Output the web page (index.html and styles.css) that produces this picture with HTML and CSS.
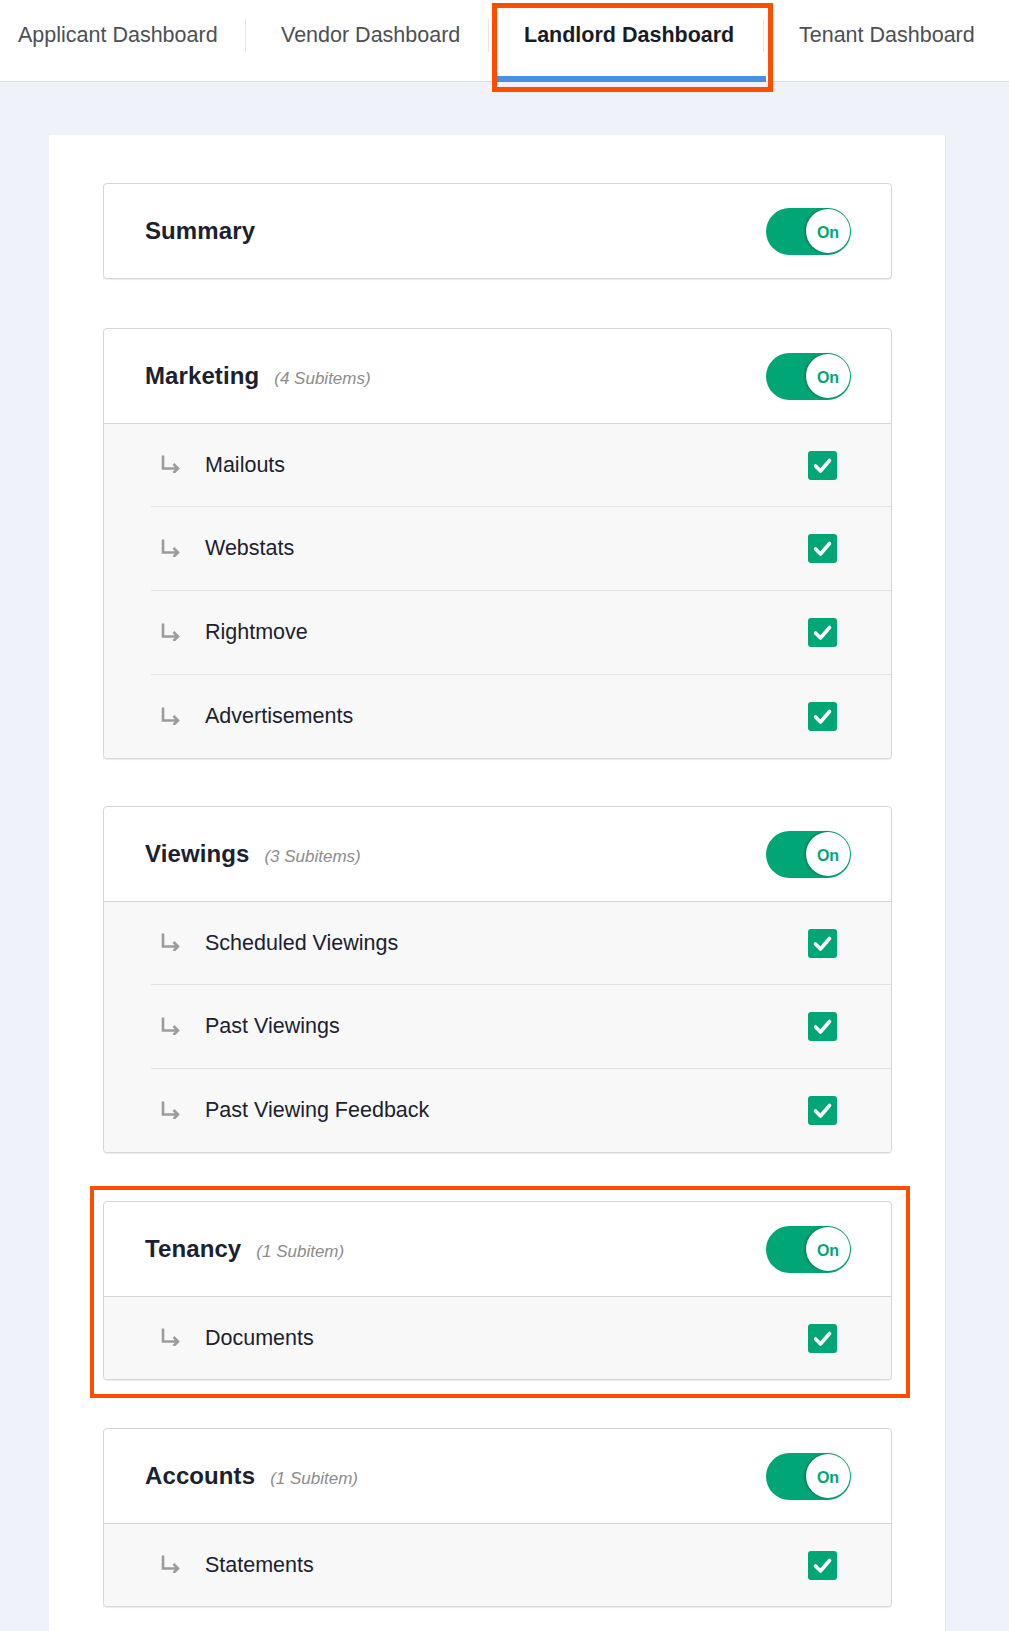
FILE: index.html
```html
<!DOCTYPE html>
<html lang="en">
<head>
<meta charset="utf-8">
<title>Landlord Dashboard</title>
<link rel="stylesheet" href="styles.css">
</head>
<body>
<nav class="tabs">
  <div class="tab tab-applicant">Applicant Dashboard</div>
  <div class="tab tab-vendor sep">Vendor Dashboard</div>
  <div class="tab tab-landlord sep active">Landlord Dashboard<span class="mark mark-tab"></span></div>
  <div class="tab tab-tenant sep">Tenant Dashboard</div>
</nav>

<main class="page">
  <section class="panel">

    <div class="card">
      <div class="card-head">
        <div class="title">Summary</div>
        <div class="toggle"><span class="knob">On</span></div>
      </div>
    </div>

    <div class="card">
      <div class="card-head">
        <div class="title">Marketing<span class="count">(4 Subitems)</span></div>
        <div class="toggle"><span class="knob">On</span></div>
      </div>
      <div class="subs">
        <div class="row"><svg class="arrow" viewBox="0 0 20 18"><path d="M2 0.5V13.5H17M12.5 9L17 13.5L12.5 18"/></svg><span class="label">Mailouts</span><span class="check"><svg viewBox="0 0 29 29"><path d="M7.5 15L12.5 20L21.5 9.5"/></svg></span></div>
        <div class="row"><svg class="arrow" viewBox="0 0 20 18"><path d="M2 0.5V13.5H17M12.5 9L17 13.5L12.5 18"/></svg><span class="label">Webstats</span><span class="check"><svg viewBox="0 0 29 29"><path d="M7.5 15L12.5 20L21.5 9.5"/></svg></span></div>
        <div class="row"><svg class="arrow" viewBox="0 0 20 18"><path d="M2 0.5V13.5H17M12.5 9L17 13.5L12.5 18"/></svg><span class="label">Rightmove</span><span class="check"><svg viewBox="0 0 29 29"><path d="M7.5 15L12.5 20L21.5 9.5"/></svg></span></div>
        <div class="row"><svg class="arrow" viewBox="0 0 20 18"><path d="M2 0.5V13.5H17M12.5 9L17 13.5L12.5 18"/></svg><span class="label">Advertisements</span><span class="check"><svg viewBox="0 0 29 29"><path d="M7.5 15L12.5 20L21.5 9.5"/></svg></span></div>
      </div>
    </div>

    <div class="card card-gap">
      <div class="card-head">
        <div class="title">Viewings<span class="count">(3 Subitems)</span></div>
        <div class="toggle"><span class="knob">On</span></div>
      </div>
      <div class="subs">
        <div class="row"><svg class="arrow" viewBox="0 0 20 18"><path d="M2 0.5V13.5H17M12.5 9L17 13.5L12.5 18"/></svg><span class="label">Scheduled Viewings</span><span class="check"><svg viewBox="0 0 29 29"><path d="M7.5 15L12.5 20L21.5 9.5"/></svg></span></div>
        <div class="row"><svg class="arrow" viewBox="0 0 20 18"><path d="M2 0.5V13.5H17M12.5 9L17 13.5L12.5 18"/></svg><span class="label">Past Viewings</span><span class="check"><svg viewBox="0 0 29 29"><path d="M7.5 15L12.5 20L21.5 9.5"/></svg></span></div>
        <div class="row"><svg class="arrow" viewBox="0 0 20 18"><path d="M2 0.5V13.5H17M12.5 9L17 13.5L12.5 18"/></svg><span class="label">Past Viewing Feedback</span><span class="check"><svg viewBox="0 0 29 29"><path d="M7.5 15L12.5 20L21.5 9.5"/></svg></span></div>
      </div>
    </div>

    <div class="card card-gap highlighted">
      <span class="mark mark-card"></span>
      <div class="card-head">
        <div class="title">Tenancy<span class="count">(1 Subitem)</span></div>
        <div class="toggle"><span class="knob">On</span></div>
      </div>
      <div class="subs">
        <div class="row"><svg class="arrow" viewBox="0 0 20 18"><path d="M2 0.5V13.5H17M12.5 9L17 13.5L12.5 18"/></svg><span class="label">Documents</span><span class="check"><svg viewBox="0 0 29 29"><path d="M7.5 15L12.5 20L21.5 9.5"/></svg></span></div>
      </div>
    </div>

    <div class="card">
      <div class="card-head">
        <div class="title">Accounts<span class="count">(1 Subitem)</span></div>
        <div class="toggle"><span class="knob">On</span></div>
      </div>
      <div class="subs">
        <div class="row"><svg class="arrow" viewBox="0 0 20 18"><path d="M2 0.5V13.5H17M12.5 9L17 13.5L12.5 18"/></svg><span class="label">Statements</span><span class="check"><svg viewBox="0 0 29 29"><path d="M7.5 15L12.5 20L21.5 9.5"/></svg></span></div>
      </div>
    </div>

  </section>
</main>
</body>
</html>
```

FILE: styles.css
```css
* { box-sizing: border-box; }

html, body {
  margin: 0;
  padding: 0;
}

body {
  background: #eff2f9;
  font-family: "Liberation Sans", Arial, sans-serif;
  color: #1b2130;
  overflow: hidden;
}

/* ---------- tabs ---------- */
.tabs {
  display: flex;
  height: 82px;
  background: #ffffff;
  border-bottom: 1px solid #dedede;
}

.tab {
  position: relative;
  height: 81px;
  padding: 23px 0 0 36px;
  font-size: 21.5px;
  line-height: 25px;
  color: #4d4f55;
  white-space: nowrap;
}

.tab-applicant { width: 245px; padding-left: 18px; }
.tab-vendor { width: 243px; }
.tab-landlord { width: 275px; }
.tab-tenant { flex: 1; }

.tab.sep::before {
  content: "";
  position: absolute;
  left: 0;
  top: 19px;
  height: 33px;
  width: 1px;
  background: #e7e7e7;
}

.tab.active {
  font-weight: bold;
  color: #171c27;
}

.tab.active::after {
  content: "";
  position: absolute;
  left: 9px;
  right: -3px;
  bottom: -1px;
  height: 6px;
  background: #4a90e2;
}

/* annotation boxes */
.mark {
  position: absolute;
  border: 5px solid #ff4d00;
  pointer-events: none;
  z-index: 3;
}

.mark-tab {
  left: 4px;
  top: 3px;
  width: 281px;
  height: 89px;
}

.mark-card {
  left: -14px;
  top: -16px;
  right: -19px;
  bottom: -19px;
  border-width: 4.5px;
}

/* ---------- page ---------- */
.page {
  padding: 53px 63px 0 49px;
}

.panel {
  background: #ffffff;
  border-right: 1px solid #e4e7ef;
  padding: 48px 53px 60px 54px;
  min-height: 1500px;
}

.card {
  position: relative;
  background: #ffffff;
  border: 1px solid #d6d6d6;
  border-radius: 4px;
  box-shadow: 0 1px 1px rgba(0, 0, 0, 0.08);
  margin-bottom: 47px;
}

.card:first-child {
  margin-bottom: 49px;
}

.card.card-gap {
  margin-bottom: 48px;
}

.card-head {
  height: 94px;
  display: flex;
  align-items: center;
  justify-content: space-between;
  padding: 0 40px 0 41px;
}

.title {
  font-size: 24px;
  font-weight: bold;
  letter-spacing: 0.1px;
  color: #1b2130;
  display: flex;
  align-items: baseline;
}

.count {
  font-size: 17px;
  font-weight: normal;
  font-style: italic;
  color: #8c8c8c;
  margin-left: 15px;
  letter-spacing: 0;
}

/* toggle */
.toggle {
  width: 85px;
  height: 47px;
  border-radius: 24px;
  background: #00a676;
  display: flex;
  align-items: center;
  justify-content: flex-end;
  padding-right: 1px;
}

.knob {
  width: 44px;
  height: 44px;
  border-radius: 50%;
  background: #ffffff;
  box-shadow: -1px 0 3px rgba(0, 0, 0, 0.35);
  display: flex;
  align-items: center;
  justify-content: center;
  padding-top: 3px;
  font-size: 16px;
  font-weight: bold;
  color: #00a676;
}

/* sub rows */
.subs {
  border-top: 1px solid #d6d6d6;
  background: #f8f8f8;
  border-radius: 0 0 4px 4px;
}

.row {
  height: 82px;
  margin-left: 47px;
  padding: 0 54px 0 10px;
  display: flex;
  align-items: center;
}

.row + .row {
  height: 84px;
  border-top: 1px solid #e2e2e2;
}

.arrow {
  width: 20px;
  height: 18px;
  margin-top: -2px;
  flex: none;
}

.arrow path {
  fill: none;
  stroke: #9c9c9c;
  stroke-width: 2.6;
}

.label {
  margin-left: 24px;
  flex: 1;
  font-size: 21.5px;
  color: #1b2130;
}

.check {
  width: 29px;
  height: 29px;
  border-radius: 3px;
  background: #00a676;
  display: flex;
  flex: none;
}

.check svg {
  width: 29px;
  height: 29px;
}

.check path {
  fill: none;
  stroke: #ffffff;
  stroke-width: 3.6;
  stroke-linecap: round;
  stroke-linejoin: round;
}
```
